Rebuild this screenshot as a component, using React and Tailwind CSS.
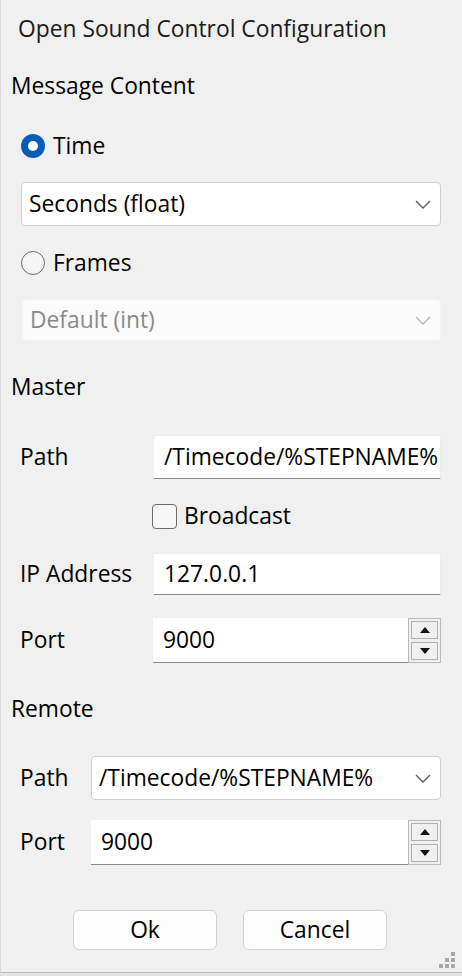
const Chevron = ({ color = '#5c5c5c' }) => (
  <svg width="16" height="9" viewBox="0 0 16 9" fill="none">
    <polyline points="1,1 8,8 15,1" stroke={color} strokeWidth="1.4" />
  </svg>
);

const Combo = ({ text, disabled, className = '' }) => (
  <div
    className={`flex items-center justify-between overflow-hidden rounded-[4px] pl-[7px] pr-[9px] ${
      disabled
        ? 'bg-[#fbfbfb] border border-[#f3f3f3] text-[#8a8a8a]'
        : 'bg-white border border-[#cfcfcf] text-black'
    } ${className}`}
  >
    <span className="whitespace-nowrap">{text}</span>
    <Chevron color={disabled ? '#b4b4b4' : '#5c5c5c'} />
  </div>
);

const TextBox = ({ text, className = '' }) => (
  <div
    className={`flex items-center overflow-hidden bg-white border border-[#ececec] border-b-[#8a8a8a] rounded-t-[3px] pl-[10px] ${className}`}
  >
    <span className="whitespace-nowrap">{text}</span>
  </div>
);

const Triangle = ({ up }) => (
  <svg width="10" height="6" viewBox="0 0 10 6">
    <polygon points={up ? '5,0 10,6 0,6' : '0,0 10,0 5,6'} fill="#111" />
  </svg>
);

const SpinBox = ({ value, className = '' }) => (
  <div className={`flex ${className}`}>
    <div className="flex flex-1 items-center bg-white border-b border-[#8a8a8a] pl-[10px]">
      {value}
    </div>
    <div className="flex w-[33px] flex-col justify-between border border-[#b9b9b9] p-[2px]">
      <div className="flex h-[18px] items-center justify-center border border-[#b0b0b0] bg-[#f0f0f0]">
        <Triangle up />
      </div>
      <div className="flex h-[18px] items-center justify-center border border-[#b0b0b0] bg-[#f0f0f0]">
        <Triangle />
      </div>
    </div>
  </div>
);

const Radio = ({ checked, label }) => (
  <div className="flex items-center gap-[8px] pl-[10px]">
    {checked ? (
      <div className="flex h-[24px] w-[24px] items-center justify-center rounded-full bg-[#0a5bb8]">
        <div className="h-[10px] w-[10px] rounded-full bg-white" />
      </div>
    ) : (
      <div className="h-[24px] w-[24px] rounded-full border-[1.5px] border-[#6a6a6a] bg-[#f5f5f5]" />
    )}
    <span>{label}</span>
  </div>
);

const Field = ({ label, labelWidth, children }) => (
  <div className="flex items-center">
    <span className={`shrink-0 pl-[9px] ${labelWidth}`}>{label}</span>
    {children}
  </div>
);

const Button = ({ children }) => (
  <button className="h-[40px] w-[144px] rounded-[6px] border border-[#d2d2d2] bg-[#fdfdfd] text-black">
    {children}
  </button>
);

export default function App() {
  return (
    <div className="flex h-[976px] w-[462px] flex-col bg-[#f0f0f0] font-['Open_Sans',sans-serif] text-[22.8px] leading-none text-black border-l border-[#dadada]">
      {/* title */}
      <div className="flex h-[58px] items-center pl-[17px] text-[22.8px] text-[#1a1a1a]">
        Open Sound Control Configuration
      </div>

      <div className="flex flex-1 flex-col pl-[10px] pr-[21px]">
        {/* Message Content */}
        <div className="mt-[12px] flex h-[32px] items-center">Message Content</div>
        <div className="mt-[28px] flex h-[32px] items-center">
          <Radio checked label="Time" />
        </div>
        <Combo text="Seconds (float)" className="ml-[10px] mt-[20px] h-[44px]" />
        <div className="mt-[21px] flex h-[32px] items-center">
          <Radio label="Frames" />
        </div>
        <Combo text="Default (int)" disabled className="ml-[11px] mt-[20px] h-[42px]" />

        {/* Master */}
        <div className="mt-[30px] flex h-[32px] items-center">Master</div>
        <div className="mt-[32px]">
          <Field label="Path" labelWidth="w-[142px]">
            <TextBox text="/Timecode/%STEPNAME%" className="h-[44px] min-w-0 flex-1" />
          </Field>
        </div>
        <div className="mt-[25px] flex h-[25px] items-center gap-[7px] pl-[141px]">
          <div className="h-[25px] w-[25px] rounded-[4px] border-[1.5px] border-[#6a6a6a] bg-[#f7f7f7]" />
          <span>Broadcast</span>
        </div>
        <div className="mt-[24px]">
          <Field label="IP Address" labelWidth="w-[142px]">
            <TextBox text="127.0.0.1" className="h-[42px] min-w-0 flex-1" />
          </Field>
        </div>
        <div className="mt-[23px]">
          <Field label="Port" labelWidth="w-[142px]">
            <SpinBox value="9000" className="h-[45px] flex-1" />
          </Field>
        </div>

        {/* Remote */}
        <div className="mt-[30px] flex h-[32px] items-center">Remote</div>
        <div className="mt-[31px]">
          <Field label="Path" labelWidth="w-[80px]">
            <Combo text="/Timecode/%STEPNAME%" className="h-[44px] min-w-0 flex-1" />
          </Field>
        </div>
        <div className="mt-[20px]">
          <Field label="Port" labelWidth="w-[80px]">
            <SpinBox value="9000" className="h-[45px] flex-1" />
          </Field>
        </div>

        {/* buttons */}
        <div className="mt-[45px] flex gap-[26px] pl-[62px]">
          <Button>Ok</Button>
          <Button>Cancel</Button>
        </div>

        <div className="flex flex-1 items-end justify-end">
          <svg width="17" height="17" viewBox="0 0 17 17" className="mb-[3px] mr-[-15px]">
            <rect x="12" y="0" width="4" height="4" fill="#a8a8a8" />
            <rect x="6" y="6" width="4" height="4" fill="#a8a8a8" />
            <rect x="12" y="6" width="4" height="4" fill="#a8a8a8" />
            <rect x="0" y="12" width="4" height="4" fill="#a8a8a8" />
            <rect x="6" y="12" width="4" height="4" fill="#a8a8a8" />
            <rect x="12" y="12" width="4" height="4" fill="#a8a8a8" />
          </svg>
        </div>
      </div>
      <div className="h-[4px] border-t border-[#b8b8b8] bg-[#e2e2e2]" />
    </div>
  );
}
